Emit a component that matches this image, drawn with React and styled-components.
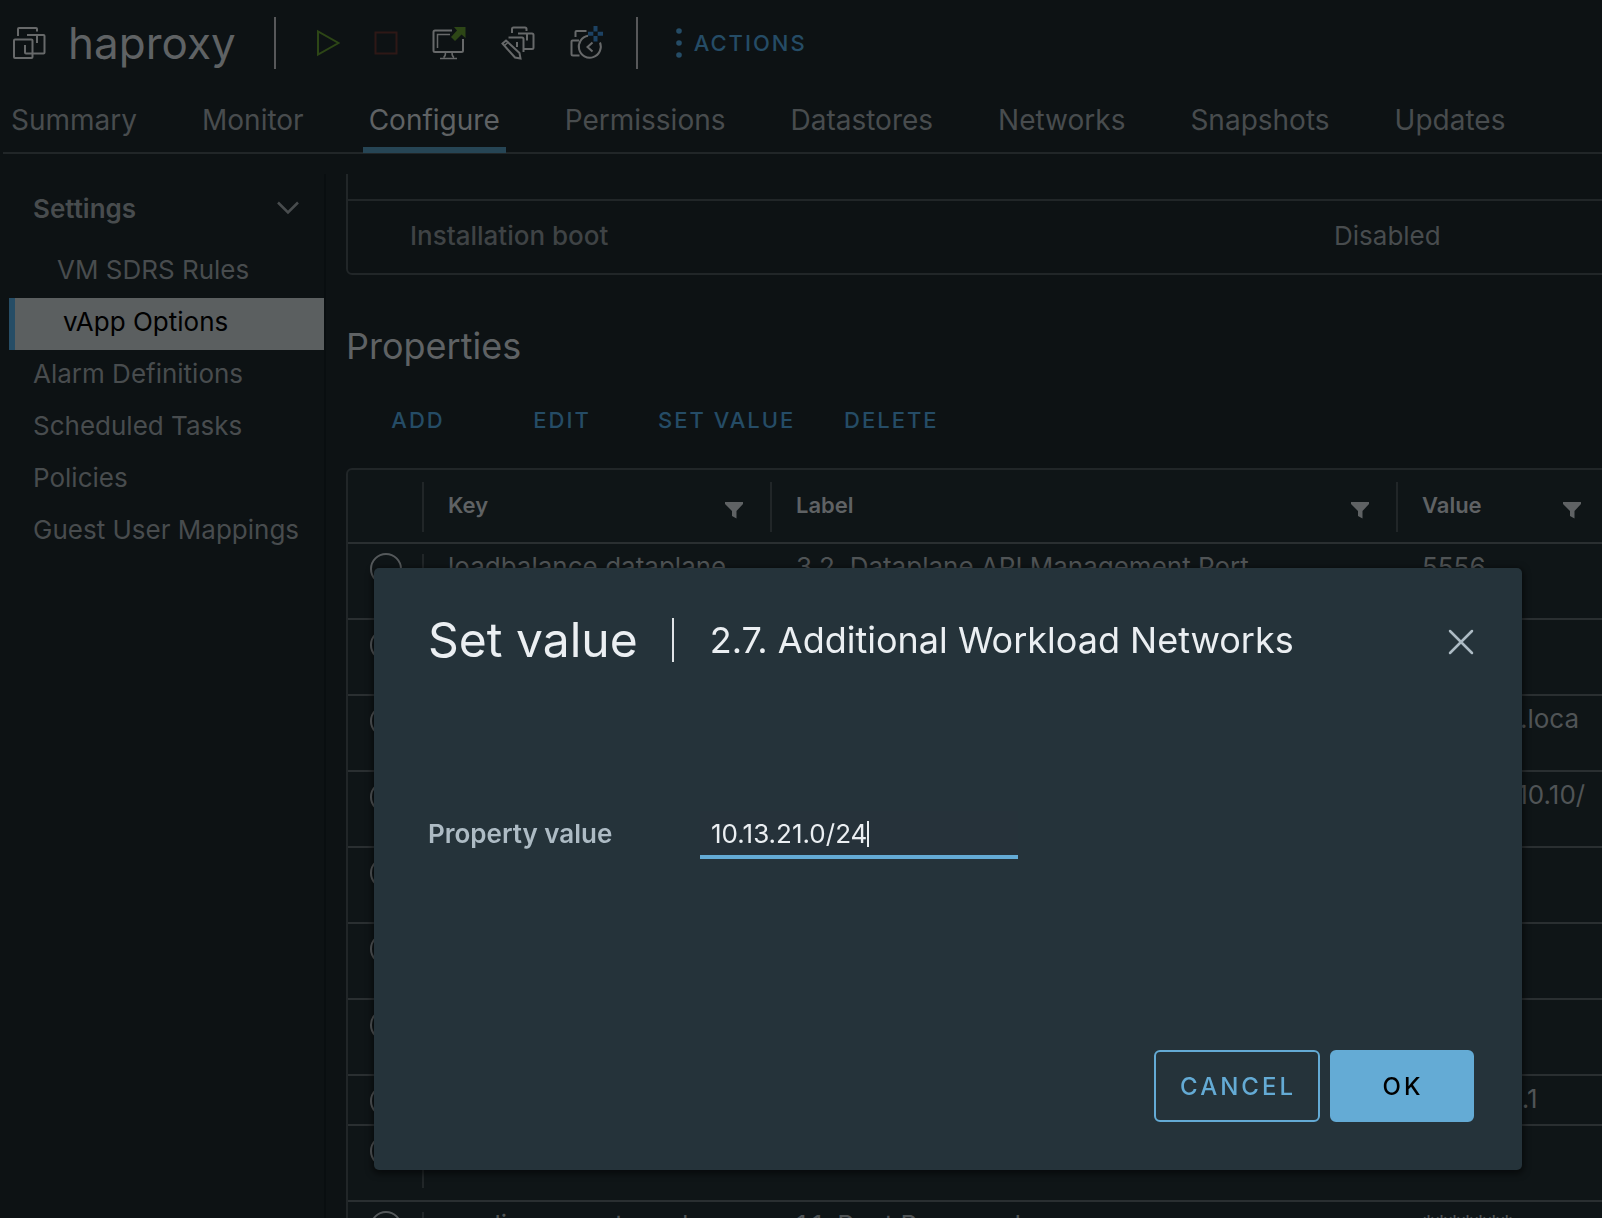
import React from "react";
import styled, { createGlobalStyle } from "styled-components";

const color = {
  page: "#0d1214",
  grid: "#0f1517",
  line: "#212628",
  rowLine: "#2a2f31",
  text: "#484c4e",
  textStrong: "#5f6264",
  link: "#254c66",
  modal: "#25333a",
  accent: "#64abd5",
};

const GlobalStyle = createGlobalStyle`
  * { box-sizing: border-box; }
  html, body { margin: 0; background: ${color.page}; overflow: hidden; }
  body {
    font-family: Inter, "Open Sans", sans-serif;
    font-size: 26px;
    color: ${color.text};
  }
  button, input { font-family: inherit; }
`;

const Page = styled.div`
  display: flex;
  flex-direction: column;
  height: 100vh;
`;

/* ---------- Header ---------- */

const Header = styled.header`
  display: flex;
  align-items: center;
  height: 86px;
  padding-left: 12px;
`;

const ObjectTitle = styled.h1`
  margin: 0 38px 0 22px;
  font-size: 44px;
  font-weight: 400;
  line-height: 52px;
  color: ${color.textStrong};
`;

const Divider = styled.span`
  width: 2px;
  height: 52px;
  background: #57585a;
`;

const Toolbar = styled.div`
  display: flex;
  align-items: center;
  gap: 34px;
  padding: 0 30px 0 40px;
`;

const IconButton = styled.button`
  display: flex;
  padding: 0;
  border: 0;
  background: none;
  color: ${(p) => p.$tone || "#67696a"};
`;

const ActionsButton = styled.button`
  display: flex;
  align-items: center;
  gap: 12px;
  padding: 0;
  margin-left: 38px;
  border: 0;
  background: none;
  color: ${color.link};
  font-size: 22px;
  font-weight: 500;
  line-height: 28px;
  letter-spacing: 2px;
`;

/* ---------- Tabs ---------- */

const Tabs = styled.nav`
  display: flex;
  gap: 53px;
  height: 68px;
  margin-left: 3px;
  padding-left: 2px;
  border-bottom: 2px solid ${color.line};
`;

const Tab = styled.a`
  height: 67px;
  padding: 14px 6px 0;
  font-size: 28px;
  line-height: 40px;
  text-decoration: none;
  color: ${(p) => (p.$active ? color.textStrong : color.text)};
  border-bottom: 6px solid ${(p) => (p.$active ? "#264555" : "transparent")};
`;

/* ---------- Body ---------- */

const Body = styled.div`
  display: flex;
  flex: 1;
  min-height: 0;
  padding-top: 20px;
`;

const Sidebar = styled.nav`
  flex: none;
  width: 326px;
  padding-left: 9px;
  border-right: 2px solid #090e10;
`;

const GroupButton = styled.button`
  display: flex;
  align-items: center;
  justify-content: space-between;
  width: 100%;
  height: 72px;
  padding: 0 24px 4px;
  border: 0;
  background: none;
  font-size: 26px;
  font-weight: 600;
  color: ${color.text};
`;

const SideLink = styled.a`
  display: block;
  height: 52px;
  padding-left: ${(p) => (p.$nested ? 48 : 24)}px;
  line-height: 48px;
  text-decoration: none;
  color: ${(p) => (p.$active ? "#000" : color.text)};
  background: ${(p) => (p.$active ? "#5b5f60" : "none")};
  border-left: ${(p) => (p.$active ? "6px solid #264d66" : "0")};
`;

const Main = styled.main`
  flex: 1;
  min-width: 0;
  margin-left: 20px;
  overflow: hidden;
`;

const ScrolledContent = styled.div`
  width: calc(100% + 8px);
  margin-top: -51px;
`;

const OptionList = styled.dl`
  margin: 0;
  border: 2px solid ${color.line};
  border-radius: 6px;
`;

const OptionRow = styled.div`
  display: grid;
  grid-template-columns: 924px 1fr;
  height: 74px;
  padding: 0 62px;
  line-height: 70px;
  & + & { border-top: 2px solid ${color.line}; }
  dt { font-weight: 500; color: #3f4345; }
  dd { margin: 0; }
`;

const SectionTitle = styled.h2`
  margin: 47px 0 0;
  font-size: 36px;
  font-weight: 400;
  line-height: 48px;
  color: ${color.textStrong};
`;

const ButtonBar = styled.div`
  display: flex;
  margin: 26px 0 24px;
`;

const TextButton = styled.button`
  min-width: 144px;
  height: 48px;
  padding: 0 24px;
  border: 0;
  background: none;
  color: ${color.link};
  font-size: 22px;
  font-weight: 500;
  letter-spacing: 2px;
`;

/* ---------- Grid ---------- */

const Grid = styled.table`
  width: 100%;
  table-layout: fixed;
  border-collapse: separate;
  border-spacing: 0;
  border: 2px solid ${color.line};
  border-radius: 6px;
  background: ${color.grid};
`;

const PickHead = styled.th`
  width: 74px;
  padding: 0;
`;

const HeadCell = styled.th`
  width: ${(p) => p.$width};
  height: 72px;
  padding: 12px 0 10px;
  text-align: left;
  font-size: 22px;
  font-weight: 600;
  color: ${color.textStrong};
`;

const HeadInner = styled.div`
  display: flex;
  justify-content: space-between;
  height: 50px;
  padding: 9px 26px 0 24px;
  line-height: 28px;
  border-left: 2px solid ${color.line};
  svg { margin-top: 10px; }
`;

const Cell = styled.td`
  height: ${(p) => (p.$single ? 50 : 76)}px;
  padding: 10px 0 12px 26px;
  border-top: 2px solid ${color.rowLine};
  vertical-align: top;
  line-height: 26px;
  color: #505456;
`;

const PickCell = styled.td`
  padding: 9px 0 7px 22px;
  border-top: 2px solid ${color.rowLine};
  vertical-align: top;
`;

const KeyCell = styled(Cell)`
  padding-left: 0;
`;

const KeyInner = styled.div`
  height: ${(p) => (p.$single ? 26 : 52)}px;
  padding-left: 24px;
  border-left: 2px solid ${color.line};
`;

const Radio = styled.input`
  appearance: none;
  display: block;
  width: 32px;
  height: 32px;
  margin: 0;
  border: 2px solid #55595b;
  border-radius: 50%;
`;

/* ---------- Dialog ---------- */

const Overlay = styled.div`
  position: fixed;
  inset: 0;
  display: flex;
  padding: 568px 80px 48px 374px;
`;

const Dialog = styled.section`
  display: flex;
  flex: 1;
  flex-direction: column;
  padding: 48px 48px 48px 54px;
  border-radius: 5px;
  background: ${color.modal};
  color: #ebeff2;
  box-shadow: 0 2px 6px 2px rgba(0, 0, 0, 0.5);
`;

const DialogHeader = styled.div`
  display: flex;
  align-items: center;
  height: 48px;
`;

const DialogTitle = styled.h2`
  margin: 0;
  padding-right: 34px;
  font-size: 48px;
  font-weight: 400;
  line-height: 48px;
`;

const DialogSubtitle = styled.p`
  flex: 1;
  margin: 0;
  padding-left: 36px;
  border-left: 2px solid #dfe3e6;
  font-size: 36px;
  line-height: 44px;
`;

const CloseButton = styled(IconButton)`
  margin-top: 4px;
`;

const Field = styled.div`
  display: flex;
  align-items: center;
  flex: 1;
  padding-bottom: 44px;
`;

const FieldLabel = styled.label`
  width: 272px;
  padding-bottom: 4px;
  font-weight: 600;
  color: #adbbc4;
`;

const InputWrap = styled.div`
  position: relative;
`;

const TextInput = styled.input`
  display: block;
  width: 318px;
  height: 48px;
  padding: 0 11px;
  border: 0;
  border-bottom: 4px solid ${color.accent};
  border-radius: 0;
  outline: 0;
  background: #26323a;
  font-size: 26px;
  color: #ebeff2;
`;

const Caret = styled.span`
  position: absolute;
  top: 10px;
  left: 167px;
  width: 2px;
  height: 26px;
  background: #ebeff2;
`;

const DialogFooter = styled.div`
  display: flex;
  justify-content: flex-end;
  gap: 10px;
`;

const DialogButton = styled.button`
  min-width: 144px;
  height: 72px;
  padding: 0 22px 0 24px;
  border: 2px solid ${color.accent};
  border-radius: 6px;
  background: ${(p) => (p.$primary ? color.accent : "transparent")};
  color: ${(p) => (p.$primary ? "#000" : color.accent)};
  font-size: 24px;
  font-weight: 500;
  letter-spacing: 3px;
`;

/* ---------- Icons ---------- */

const Svg = ({ w, h, children, ...rest }) => (
  <svg
    width={w}
    height={h}
    viewBox={`0 0 ${w} ${h}`}
    fill="none"
    stroke="currentColor"
    strokeWidth="2"
    aria-hidden="true"
    {...rest}
  >
    {children}
  </svg>
);

const VmIcon = () => (
  <Svg w={34} h={34} color="#67696a">
    <path d="M6 10V3q0-1 1-1h17q1 0 1 1v2.500" />
    <path d="M15 9h16.500q1 0 1 1v16.500q0 1-1 1H14q-1 0-1-1V19" />
    <path d="M25 9v8" />
    <rect x="2" y="13.500" width="18.500" height="18.500" rx="1" />
  </Svg>
);

const PlayIcon = () => (
  <Svg w={24} h={28}>
    <path d="M2 2.500v23L22.500 14z" />
  </Svg>
);

const StopIcon = () => (
  <Svg w={24} h={24}>
    <rect x="1.500" y="1.500" width="21" height="21" />
  </Svg>
);

const ConsoleIcon = () => (
  <Svg w={34} h={36}>
    <path d="M20 5.500H3q-1.500 0-1.500 1.500v18.500q0 1.500 1.500 1.500h26.500q1.500 0 1.500-1.500V14" />
    <path d="M5.500 23V9.500H18" strokeWidth="1.500" />
    <path d="M13.500 27.500q0 4-2 5M20 27.500q0 4 2 5M8 33.500h17" strokeWidth="1.500" />
    <path d="M22 2h11.500v11l-4-3.500-6.500 6.500-4-4 6-6.500z" fill="#2d4616" stroke="none" />
  </Svg>
);

const EditVmIcon = () => (
  <Svg w={36} h={36}>
    <path d="M12 8V4q0-1.500 1.500-1.500H25q1.500 0 1.500 1.500v2" />
    <path d="M18 8.500h14q1.500 0 1.500 1.500v12.500q0 1.500-1.500 1.500h-9" />
    <path d="M8.500 12.500h13.500q1.500 0 1.500 1.500v13M27 8.500v7M17 17v5" />
    <path d="M2.500 18.500l3.500-3 13.500 12.500 1 5.500-5.500-1z" />
    <path d="M4.500 20.500l4-3.500" strokeWidth="1.500" />
  </Svg>
);

const SnapshotIcon = () => (
  <Svg w={36} h={36}>
    <path d="M5.500 12V7q0-1 1-1h10" />
    <path d="M9 15.500H2.500q-1 0-1 1V29q0 1.500 1.500 1.500h6.500" />
    <path d="M18 10.800A11 11 0 1 0 30 17.500" />
    <path d="M22.500 17.500L17.500 22l5 4.500" />
    <path d="M25.500 1v5.500M25.500 11v5.500M18 8.800h5.300M27.700 8.800H33" stroke="#1d4263" strokeWidth="4" />
  </Svg>
);

const DotsIcon = () => (
  <Svg w={6} h={30}>
    <g fill="currentColor" stroke="none">
      <circle cx="3" cy="3" r="2.800" />
      <circle cx="3" cy="15" r="2.800" />
      <circle cx="3" cy="27" r="2.800" />
    </g>
  </Svg>
);

const ChevronIcon = () => (
  <Svg w={24} h={16} strokeWidth="2.500">
    <path d="M2 2.500l10 10 10-10" />
  </Svg>
);

const FilterIcon = () => (
  <Svg w={20} h={18}>
    <path d="M1 1h18v2l-6.500 7v7.500L8 15v-5L1 3z" fill="currentColor" stroke="none" />
  </Svg>
);

const CloseIcon = () => (
  <Svg w={26} h={26}>
    <path d="M2 2l22 22M24 2L2 24" strokeLinecap="round" strokeWidth="2.500" />
  </Svg>
);

/* ---------- Data ---------- */

const tabs = [
  "Summary",
  "Monitor",
  "Configure",
  "Permissions",
  "Datastores",
  "Networks",
  "Snapshots",
  "Updates",
];

const sideLinks = [
  { text: "VM SDRS Rules", nested: true },
  { text: "vApp Options", nested: true, active: true },
  { text: "Alarm Definitions" },
  { text: "Scheduled Tasks" },
  { text: "Policies" },
  { text: "Guest User Mappings" },
];

const columns = [
  { name: "Key", width: "348px" },
  { name: "Label", width: "626px" },
  { name: "Value", width: "auto" },
];

const rows = [
  { key: "loadbalance.dataplane", label: "3.2. Dataplane API Management Port", value: "5556" },
  {},
  { value: "haproxy.loca" },
  { value: "192.168.10.10/" },
  {},
  {},
  {},
  { value: "10.13.110.1", single: true },
  {},
  { key: "appliance.root_pwd", label: "1.1. Root Password", value: "*******" },
];

export default function App() {
  return (
    <>
      <GlobalStyle />
      <Page>
        <Header>
          <VmIcon />
          <ObjectTitle>haproxy</ObjectTitle>
          <Divider />
          <Toolbar>
            <IconButton $tone="#2d4616" aria-label="Power on"><PlayIcon /></IconButton>
            <IconButton $tone="#2e1816" aria-label="Power off"><StopIcon /></IconButton>
            <IconButton aria-label="Launch console"><ConsoleIcon /></IconButton>
            <IconButton aria-label="Edit settings"><EditVmIcon /></IconButton>
            <IconButton aria-label="Take snapshot"><SnapshotIcon /></IconButton>
          </Toolbar>
          <Divider />
          <ActionsButton>
            <DotsIcon />
            ACTIONS
          </ActionsButton>
        </Header>

        <Tabs>
          {tabs.map((t) => (
            <Tab key={t} href="#" $active={t === "Configure"}>{t}</Tab>
          ))}
        </Tabs>

        <Body>
          <Sidebar>
            <GroupButton>
              Settings
              <ChevronIcon />
            </GroupButton>
            {sideLinks.map((l) => (
              <SideLink key={l.text} href="#" $nested={l.nested} $active={l.active}>
                {l.text}
              </SideLink>
            ))}
          </Sidebar>

          <Main>
            <ScrolledContent>
              <OptionList>
                <OptionRow>
                  <dt>OVF environment transport</dt>
                </OptionRow>
                <OptionRow>
                  <dt>Installation boot</dt>
                  <dd>Disabled</dd>
                </OptionRow>
              </OptionList>

              <SectionTitle>Properties</SectionTitle>
              <ButtonBar>
                <TextButton>ADD</TextButton>
                <TextButton>EDIT</TextButton>
                <TextButton>SET VALUE</TextButton>
                <TextButton>DELETE</TextButton>
              </ButtonBar>

              <Grid>
                <thead>
                  <tr>
                    <PickHead />
                    {columns.map((c) => (
                      <HeadCell key={c.name} $width={c.width}>
                        <HeadInner>
                          {c.name}
                          <FilterIcon />
                        </HeadInner>
                      </HeadCell>
                    ))}
                  </tr>
                </thead>
                <tbody>
                  {rows.map((r, i) => (
                    <tr key={i}>
                      <PickCell>
                        <Radio type="radio" name="property" aria-label={r.label || `Property ${i + 1}`} />
                      </PickCell>
                      <KeyCell $single={r.single}>
                        <KeyInner $single={r.single}>{r.key}</KeyInner>
                      </KeyCell>
                      <Cell $single={r.single}>{r.label}</Cell>
                      <Cell $single={r.single}>{r.value}</Cell>
                    </tr>
                  ))}
                </tbody>
              </Grid>
            </ScrolledContent>
          </Main>
        </Body>
      </Page>

      <Overlay>
        <Dialog role="dialog" aria-labelledby="dialog-title">
          <DialogHeader>
            <DialogTitle id="dialog-title">Set value</DialogTitle>
            <DialogSubtitle>2.7. Additional Workload Networks</DialogSubtitle>
            <CloseButton $tone="#adbbc4" aria-label="Close"><CloseIcon /></CloseButton>
          </DialogHeader>
          <Field>
            <FieldLabel htmlFor="property-value">Property value</FieldLabel>
            <InputWrap>
              <TextInput id="property-value" type="text" defaultValue="10.13.21.0/24" />
              <Caret />
            </InputWrap>
          </Field>
          <DialogFooter>
            <DialogButton>CANCEL</DialogButton>
            <DialogButton $primary>OK</DialogButton>
          </DialogFooter>
        </Dialog>
      </Overlay>
    </>
  );
}
